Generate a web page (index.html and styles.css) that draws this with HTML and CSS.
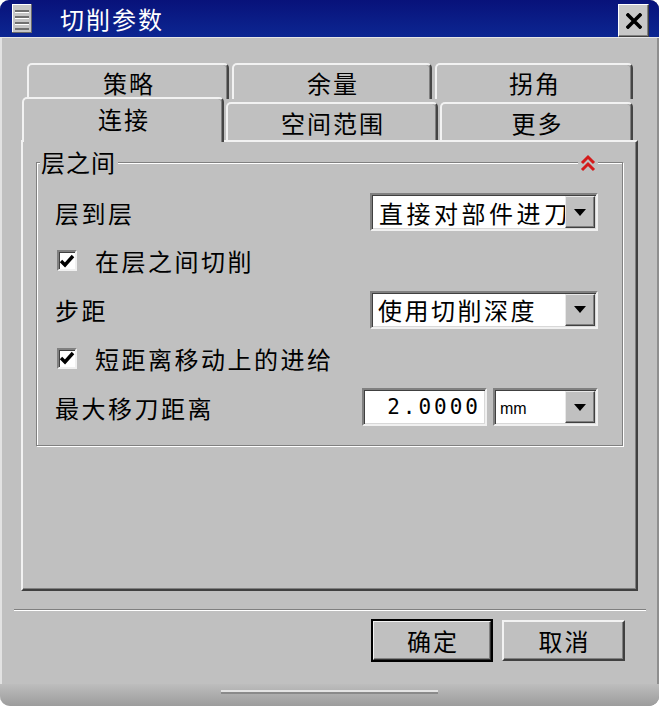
FILE: index.html
```html
<!DOCTYPE html>
<html lang="zh">
<head>
	<meta charset="UTF-8">
	<title>切削参数</title>
	<link rel="stylesheet" href="styles.css">
</head>
<body>
	<div class="dialog">
		<div class="titlebar">
			<span class="sysmenu">
				<svg width="20" height="29" viewBox="0 0 20 29">
					<rect x="0" y="0" width="20" height="29" fill="#c6c6c6"/>
					<rect x="0" y="0" width="20" height="1" fill="#fff"/>
					<rect x="0" y="0" width="1" height="29" fill="#fff"/>
					<rect x="19" y="0" width="1" height="29" fill="#6a6a6a"/>
					<rect x="0" y="28" width="20" height="1" fill="#6a6a6a"/>
					<rect x="3" y="6" width="14" height="2" fill="#707070"/>
					<rect x="3" y="8" width="14" height="1" fill="#fff"/>
					<rect x="3" y="12" width="14" height="2" fill="#707070"/>
					<rect x="3" y="14" width="14" height="1" fill="#fff"/>
					<rect x="3" y="18" width="14" height="2" fill="#707070"/>
					<rect x="3" y="20" width="14" height="1" fill="#fff"/>
					<rect x="3" y="24" width="14" height="2" fill="#707070"/>
				</svg>
			</span>
			<span class="title">切削参数</span>
			<span class="close">
				<svg width="16" height="16" viewBox="0 0 16 16">
					<path d="M2 2 L14 14 M14 2 L2 14" stroke="#000" stroke-width="3.6" stroke-linecap="square"/>
				</svg>
			</span>
		</div>

		<div class="main">
			<div class="tabs">
				<div class="tabrow back">
					<div class="tab t1">策略</div>
					<div class="tab t2">余量</div>
					<div class="tab t3">拐角</div>
				</div>
				<div class="tabrow front">
					<div class="tab active">连接</div>
					<div class="tab t4">空间范围</div>
					<div class="tab t5">更多</div>
				</div>
			</div>

			<div class="panel">
				<div class="group">
					<div class="group-head">
						<span class="legend">层之间</span>
						<span class="fold">
							<svg width="18" height="18" viewBox="0 0 18 18">
								<path d="M3 9 L9 3 L15 9" fill="none" stroke="#d41a1a" stroke-width="3"/>
								<path d="M3 16 L9 10 L15 16" fill="none" stroke="#d41a1a" stroke-width="3"/>
							</svg>
						</span>
					</div>
					<div class="rows">
						<div class="row">
							<span class="label">层到层</span>
							<div class="combo wide">
								<span class="value clip">直接对部件进刀</span>
								<span class="drop"><i></i></span>
							</div>
						</div>
						<div class="row">
							<span class="check"><svg width="16" height="16" viewBox="0 0 16 16"><path d="M2 8 L6 12 L14 3" fill="none" stroke="#000" stroke-width="3.4"/></svg></span>
							<span class="check-text">在层之间切削</span>
						</div>
						<div class="row">
							<span class="label">步距</span>
							<div class="combo wide">
								<span class="value">使用切削深度</span>
								<span class="drop"><i></i></span>
							</div>
						</div>
						<div class="row">
							<span class="check"><svg width="16" height="16" viewBox="0 0 16 16"><path d="M2 8 L6 12 L14 3" fill="none" stroke="#000" stroke-width="3.4"/></svg></span>
							<span class="check-text">短距离移动上的进给</span>
						</div>
						<div class="row">
							<span class="label">最大移刀距离</span>
							<div class="field">
								<span class="num">2.0000</span>
								<div class="combo unit">
									<span class="value small">mm</span>
									<span class="drop"><i></i></span>
								</div>
							</div>
						</div>
					</div>
				</div>
			</div>

			<div class="sep"></div>

			<div class="buttons">
				<button class="btn default">确定</button>
				<button class="btn cancel">取消</button>
			</div>
		</div>

		<div class="footer">
			<div class="grip"></div>
		</div>
	</div>
</body>
</html>
```

FILE: styles.css
```css
* {
	margin: 0;
	padding: 0;
	box-sizing: border-box;
}

body {
	background: #fff;
	font-family: "Noto Sans CJK SC", "Noto Sans", sans-serif;
	font-size: 24px;
	color: #000;
}

.dialog {
	width: 659px;
	height: 706px;
	background: #c0c0c0;
	border-radius: 9px 9px 10px 10px;
	overflow: hidden;
	display: flex;
	flex-direction: column;
	box-shadow: inset 2px 0 #e2e2e2, inset -2px 0 #8e8e8e;
}

/* title bar */
.titlebar {
	height: 38px;
	flex: none;
	display: flex;
	align-items: center;
	padding: 0 10px 0 12px;
	background: linear-gradient(#08127a, #0c2692);
	border-bottom: 1px solid #e6e6e6;
	color: #fff;
}

.sysmenu {
	display: flex;
	height: 29px;
}

.title {
	margin-left: 28px;
	letter-spacing: 2px;
	line-height: 30px;
}

.close {
	margin-left: auto;
	align-self: flex-end;
	width: 31px;
	height: 33px;
	display: flex;
	align-items: center;
	justify-content: center;
	background: #c8c8c8;
	border: 1px solid;
	border-color: #fff #404040 #404040 #fff;
	box-shadow: inset -1px -1px #808080;
}

/* body */
.main {
	flex: none;
	padding: 25px 21px 0;
}

.tabrow {
	display: flex;
}

.back {
	height: 36px;
	padding-left: 6px;
	gap: 3px;
}

.front {
	height: 41px;
	align-items: flex-end;
	padding-left: 1px;
	gap: 2px;
}

.tab {
	display: flex;
	align-items: center;
	justify-content: center;
	height: 100%;
	border-style: solid;
	border-width: 2px 2px 0 2px;
	border-color: #f2f2f2 #454545 transparent #f2f2f2;
	border-radius: 5px 5px 0 0;
	box-shadow: inset -1px 0 #808080;
	background: #c0c0c0;
	letter-spacing: 2px;
	padding-left: 2px;
}

.t1 { width: 202px; }
.t2 { width: 200px; }
.t3 { width: 198px; }
.t4 { width: 212px; height: 38px; }
.t5 { width: 193px; height: 38px; }

.tab.active {
	width: 202px;
	height: 45px;
	margin-bottom: -2px;
	position: relative;
	z-index: 1;
	padding-bottom: 4px;
}

.panel {
	height: 451px;
	border: 2px solid;
	border-color: #f2f2f2 #404040 #404040 #f2f2f2;
	box-shadow: inset -1px -1px #808080;
}

/* group box */
.group {
	margin: 20px 13px 0;
	border: 1px solid #808080;
	box-shadow: inset 1px 1px #fff, 1px 1px #fff;
}

.group-head {
	display: flex;
	justify-content: space-between;
	align-items: center;
	height: 28px;
	margin-top: -15px;
}

.legend {
	margin-left: 3px;
	padding: 0 2px 0 1px;
	background: #c0c0c0;
	line-height: 28px;
	letter-spacing: 1px;
}

.fold {
	display: flex;
	margin-right: 24px;
	padding: 0 1px;
	background: #c0c0c0;
	margin-top: 2px;
}

.rows {
	display: flex;
	flex-direction: column;
	gap: 10.75px;
	padding: 17px 24px 19px 18px;
}

.row {
	display: flex;
	align-items: center;
	height: 38px;
}

.label {
	letter-spacing: 2.5px;
}

.combo,
.num {
	display: flex;
	align-items: center;
	height: 38px;
	background: #fff;
	border: 2px solid;
	border-color: #808080 #f0f0f0 #f0f0f0 #808080;
	box-shadow: inset 1px 1px #404040, inset -1px -1px #d8d8d8;
	overflow: hidden;
	white-space: nowrap;
}

.combo.wide {
	margin-left: auto;
	width: 228px;
}

.value {
	flex: 1;
	overflow: hidden;
	padding-left: 6px;
	letter-spacing: 2.5px;
}

.value.clip {
	letter-spacing: 3.5px;
	padding-left: 7px;
}

.value.small {
	font-family: "Liberation Sans", sans-serif;
	font-size: 16px;
	padding-left: 5px;
	letter-spacing: 0;
	padding-top: 4px;
}

.drop {
	flex: none;
	width: 30px;
	height: 32px;
	margin-right: 1px;
	display: flex;
	align-items: center;
	justify-content: center;
	background: #c0c0c0;
	border: 1px solid;
	border-color: #e8e8e8 #404040 #404040 #e8e8e8;
	box-shadow: inset -1px -1px #808080;
}

.drop i {
	width: 0;
	height: 0;
	border-left: 6px solid transparent;
	border-right: 6px solid transparent;
	border-top: 7px solid #000;
}

.check {
	width: 20px;
	height: 21px;
	margin-left: 2px;
	display: flex;
	align-items: center;
	justify-content: center;
	background: #fff;
	border: 2px solid;
	border-color: #808080 #f0f0f0 #f0f0f0 #808080;
	box-shadow: inset 1px 1px #404040;
}

.check-text {
	margin-left: 18px;
	letter-spacing: 2.5px;
}

.field {
	margin-left: auto;
	display: flex;
	gap: 6px;
}

.num {
	width: 125px;
	justify-content: flex-end;
	padding-right: 4px;
	font-family: "DejaVu Sans Mono", monospace;
	font-size: 21px;
	letter-spacing: 3px;
}

.combo.unit {
	width: 105px;
}

/* bottom */
.sep {
	margin: 18px -8px 0 -7px;
	height: 2px;
	border-top: 1px solid #808080;
	border-bottom: 1px solid #fff;
}

.buttons {
	display: flex;
	justify-content: flex-end;
	gap: 10px;
	padding-right: 13px;
	margin-top: 9px;
}

.btn {
	height: 41px;
	background: #c0c0c0;
	font-family: inherit;
	font-size: 24px;
	letter-spacing: 2px;
	padding-left: 2px;
	border: 2px solid;
	border-color: #f2f2f2 #404040 #404040 #f2f2f2;
	box-shadow: inset -1px -1px #808080;
}

.btn.default {
	width: 120px;
	outline: 2px solid #000;
	outline-offset: -1px;
	border-color: #f2f2f2 #303030 #303030 #f2f2f2;
}

.btn.cancel {
	width: 123px;
}

.footer {
	margin-top: auto;
	height: 22px;
	background: linear-gradient(#bdbdbd, #9c9c9c);
	padding-top: 6px;
}

.grip {
	width: 217px;
	height: 4px;
	margin: 0 auto;
	border-top: 2px solid #e4e4e4;
	border-bottom: 2px solid #8a8a8a;
}
```
